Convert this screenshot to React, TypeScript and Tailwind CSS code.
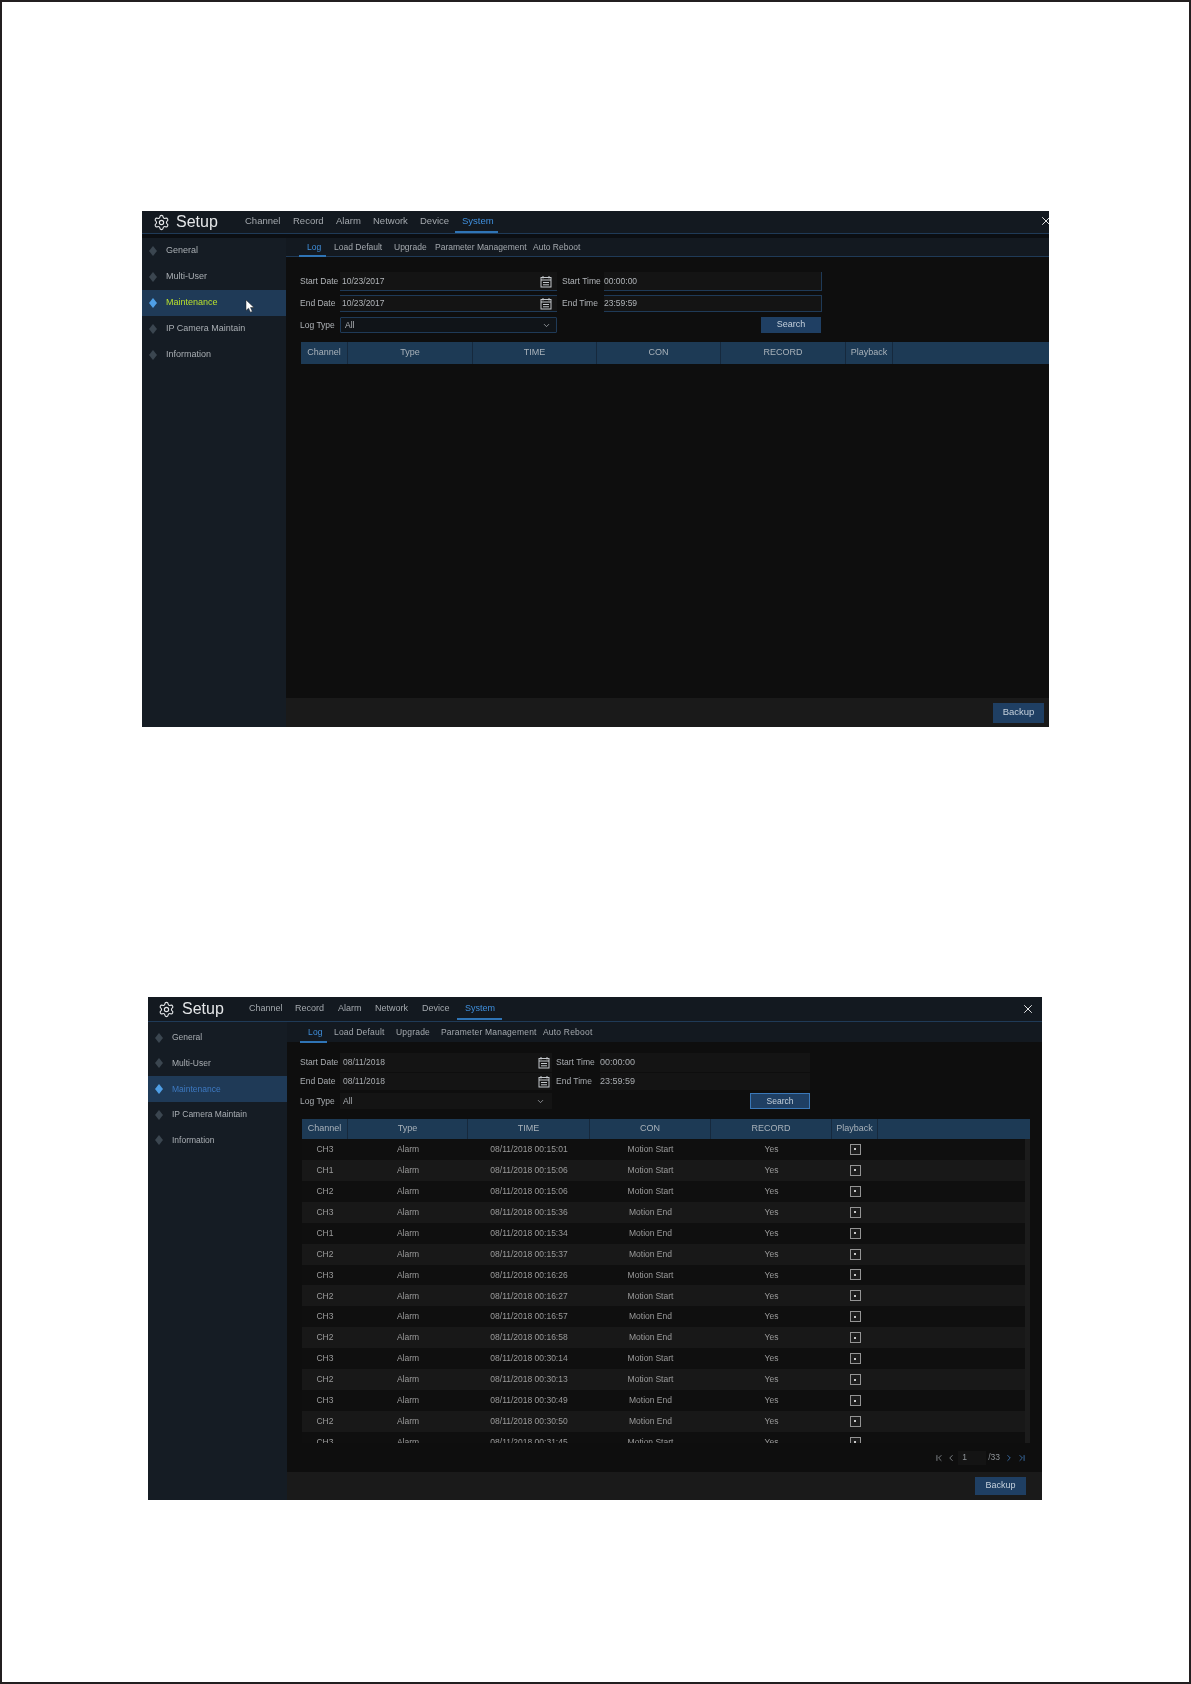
import { ChevronDown, ChevronFirst, ChevronLast, ChevronLeft, ChevronRight, Settings, X } from "lucide-react";

const NAV = ["Channel", "Record", "Alarm", "Network", "Device", "System"];
const MENU = ["General", "Multi-User", "Maintenance", "IP Camera Maintain", "Information"];
const TABS = ["Log", "Load Default", "Upgrade", "Parameter Management", "Auto Reboot"];
const COLS = ["Channel", "Type", "TIME", "CON", "RECORD", "Playback"];

const LOGS = [
  ["CH3", "00:15:01", "Motion Start"],
  ["CH1", "00:15:06", "Motion Start"],
  ["CH2", "00:15:06", "Motion Start"],
  ["CH3", "00:15:36", "Motion End"],
  ["CH1", "00:15:34", "Motion End"],
  ["CH2", "00:15:37", "Motion End"],
  ["CH3", "00:16:26", "Motion Start"],
  ["CH2", "00:16:27", "Motion Start"],
  ["CH3", "00:16:57", "Motion End"],
  ["CH2", "00:16:58", "Motion End"],
  ["CH3", "00:30:14", "Motion Start"],
  ["CH2", "00:30:13", "Motion Start"],
  ["CH3", "00:30:49", "Motion End"],
  ["CH2", "00:30:50", "Motion End"],
  ["CH3", "00:31:45", "Motion Start"],
];

function Diamond({ active }: { active?: boolean }) {
  return (
    <svg width="8" height="10" viewBox="0 0 8 10" className={active ? "text-[#4f9fe6]" : "text-[#3b4650]"}>
      <polygon points="4,0 8,5 4,10 0,5" fill="currentColor" />
    </svg>
  );
}

function CalendarIcon() {
  return (
    <svg width="12" height="13" viewBox="0 0 12 13" fill="none" stroke="#c4c8cc" strokeWidth="1" className="shrink-0">
      <rect x="1" y="2.5" width="10" height="9.5" />
      <path d="M3 1v2.5M9 1v2.5M1 5h10M3 7.5h6M3 9.8h6" />
    </svg>
  );
}

function PlayIcon() {
  return (
    <div className="flex h-[11px] w-[11px] items-center justify-center border border-[#949494] bg-[#1c1c1c]">
      <div className="h-[2px] w-[2px] bg-[#c8c8c8]" />
    </div>
  );
}

function Header({
  height,
  navCols,
  iconBox,
  underline,
  itemPad,
}: {
  height: string;
  navCols: string;
  iconBox: string;
  underline: string;
  itemPad: string;
}) {
  return (
    <div className={"flex shrink-0 items-center border-b border-[#1f3a57] bg-[#131920] " + height}>
      <div className={iconBox}>
        <Settings size={17} strokeWidth={1.6} className="text-[#e4e6e8]" />
        <span className="text-[16px] leading-none text-[#e4e6e8]">Setup</span>
      </div>
      <div className={navCols}>
        {NAV.map((n) => (
          <div key={n} className={n === "System" ? "relative flex h-[22px] items-center text-[#3f8fdc] " + itemPad : "flex h-[22px] items-center text-[#a4a9ae] " + itemPad}>
            {n}
            {n === "System" && <div className={underline} />}
          </div>
        ))}
      </div>
    </div>
  );
}

function Sidebar({ width, rowH, active, cursor }: { width: string; rowH: string; active: string; cursor?: boolean }) {
  return (
    <div className={width}>
      {MENU.map((m, i) => (
        <div key={m} className={i === 2 ? "relative flex items-center gap-[9px] bg-[#1f3a57] pl-[7px] " + rowH : "flex items-center gap-[9px] pl-[7px] " + rowH}>
          <Diamond active={i === 2} />
          <span className={i === 2 ? active : "text-[#a9aeb3]"}>{m}</span>
          {i === 2 && cursor && (
            <svg width="11" height="14" viewBox="0 0 11 14" className="absolute left-[103px] top-[9px]">
              <path d="M1 1v10.5l2.6-2.3 1.8 4 1.9-.8-1.8-3.9h3.5z" fill="#ffffff" stroke="#222" strokeWidth="0.5" />
            </svg>
          )}
        </div>
      ))}
    </div>
  );
}

function Tabs({ cols, height }: { cols: string; height: string }) {
  return (
    <div className={height}>
      <div className={cols}>
        {TABS.map((t, i) => (
          <div key={t} className={i === 0 ? "relative flex h-full items-center whitespace-nowrap text-[#3f8fdc]" : "flex h-full items-center whitespace-nowrap text-[#a4a9ae]"}>
            <span className={i === 0 ? "pl-[8px]" : ""}>{t}</span>
            {i === 0 && <div className="absolute bottom-[-1px] left-0 h-[2px] w-[27px] bg-[#2f74b5]" />}
          </div>
        ))}
      </div>
    </div>
  );
}

function TableHead({ cols }: { cols: string }) {
  return (
    <div className={cols}>
      {COLS.map((c) => (
        <div key={c} className="flex items-center justify-center border-r border-[#16293d]">
          {c}
        </div>
      ))}
      <div />
    </div>
  );
}

function EmptyLog() {
  return (
    <div className="relative flex h-[516px] w-[907px] flex-col overflow-hidden bg-[#0e0e0e] text-[9px] blur-[0.6px]">
      <Header
        height="h-[23px]"
        iconBox="flex w-[103px] shrink-0 items-center gap-[6px] pl-[11px]"
        navCols="grid grid-cols-[48px_43px_37px_47px_42px_45px] text-[9.5px]"
        underline="absolute bottom-0 left-[-7px] h-[2px] w-[43px] bg-[#2f74b5]"
        itemPad="pb-[2px]"
      />
      <X size={14} strokeWidth={1.5} className="absolute right-[-4px] top-[3px] text-white" />
      <div className="h-[4px] shrink-0 bg-[#0b0e12]" />
      <div className="flex min-h-0 flex-1">
        <Sidebar width="w-[144px] shrink-0 bg-[#151c24]" rowH="h-[26px]" active="text-[#b9e12d]" cursor />
        <div className="flex min-w-0 flex-1 flex-col">
          <Tabs
            height="h-[19px] shrink-0 border-b border-[#1f3a57] bg-[#131920] pl-[13px]"
            cols="grid h-full grid-cols-[35px_60px_41px_98px_60px] text-[8.5px]"
          />
          <div className="flex-1 pl-[14px] pt-[15px] text-[#b0b4b8]">
            <div className="flex h-[19px]">
              <div className="flex w-[40px] items-center text-[8.5px]">Start Date</div>
              <div className="flex w-[217px] items-center justify-between border-b border-[#1f3a57] bg-[#141414] pl-[2px] pr-[5px] text-[8.5px]">
                10/23/2017
                <CalendarIcon />
              </div>
              <div className="ml-[5px] flex w-[42px] items-center text-[8.5px]">Start Time</div>
              <div className="flex w-[218px] items-center border-b border-r border-[#1f3a57] bg-[#141414] text-[8.5px]">00:00:00</div>
            </div>
            <div className="mt-[4px] flex h-[17px]">
              <div className="flex w-[40px] items-center text-[8.5px]">End Date</div>
              <div className="flex w-[217px] items-center justify-between border-y border-[#1f3a57] bg-[#141414] pl-[2px] pr-[5px] text-[8.5px]">
                10/23/2017
                <CalendarIcon />
              </div>
              <div className="ml-[5px] flex w-[42px] items-center text-[8.5px]">End Time</div>
              <div className="flex w-[218px] items-center border border-l-0 border-[#1f3a57] bg-[#141414] text-[8.5px]">23:59:59</div>
            </div>
            <div className="mt-[5px] flex h-[16px]">
              <div className="flex w-[40px] items-center text-[8.5px]">Log Type</div>
              <div className="flex w-[217px] items-center justify-between rounded-[1px] border border-[#1f3a57] bg-[#101418] pl-[4px] pr-[5px] text-[8.5px]">
                All
                <ChevronDown size={9} />
              </div>
              <div className="ml-[204px] flex w-[60px] items-center justify-center bg-[#1f3f63] text-[9px] text-[#c4d0dc]">Search</div>
            </div>
            <div className="ml-[1px] mt-[9px]">
              <TableHead cols="grid h-[22px] grid-cols-[47px_125px_124px_124px_125px_47px_1fr] bg-[#1d3a55] text-[9px] text-[#a9b2ba]" />
            </div>
          </div>
          <div className="flex h-[29px] shrink-0 items-center justify-end bg-[#1a1a1a] pr-[5px]">
            <div className="flex h-[20px] w-[51px] items-center justify-center bg-[#1f3f63] text-[9.5px] text-[#c4d0dc]">Backup</div>
          </div>
        </div>
      </div>
    </div>
  );
}

function FullLog() {
  return (
    <div className="relative mt-[270px] ml-[6px] flex h-[503px] w-[894px] flex-col overflow-hidden bg-[#0e0e0e] text-[8.5px] blur-[0.6px]">
      <Header
        height="h-[25px]"
        iconBox="flex w-[101px] shrink-0 items-center gap-[7px] pl-[10px]"
        navCols="grid grid-cols-[46px_43px_37px_47px_43px_45px] text-[9px]"
        underline="absolute bottom-0 left-[-8px] h-[2px] w-[45px] bg-[#2f74b5]"
        itemPad=""
      />
      <X size={14} strokeWidth={1.5} className="absolute right-[7px] top-[5px] text-white" />
      <div className="flex min-h-0 flex-1">
        <Sidebar width="w-[139px] shrink-0 bg-[#151c24] pt-[3px]" rowH="h-[25.6px]" active="text-[#3c78c0]" />
        <div className="flex min-w-0 flex-1 flex-col">
          <Tabs
            height="h-[20px] shrink-0 bg-[#131920] pl-[13px]"
            cols="grid h-full grid-cols-[34px_62px_45px_102px_60px] text-[8.5px] tracking-[0.2px]"
          />
          <div className="relative flex-1 pl-[13px] pt-[11px] text-[#a8acb0]">
            <div className="flex h-[19px]">
              <div className="flex w-[40px] items-center text-[8.5px]">Start Date</div>
              <div className="flex w-[212px] items-center justify-between bg-[#141414] pl-[3px] pr-[2px] text-[8.5px]">
                08/11/2018
                <CalendarIcon />
              </div>
              <div className="ml-[4px] flex w-[44px] items-center text-[8.5px]">Start Time</div>
              <div className="flex w-[210px] items-center bg-[#141414] text-[9px]">00:00:00</div>
            </div>
            <div className="mt-[1px] flex h-[17px]">
              <div className="flex w-[40px] items-center text-[8.5px]">End Date</div>
              <div className="flex w-[212px] items-center justify-between bg-[#141414] pl-[3px] pr-[2px] text-[8.5px]">
                08/11/2018
                <CalendarIcon />
              </div>
              <div className="ml-[4px] flex w-[44px] items-center text-[8.5px]">End Time</div>
              <div className="flex w-[210px] items-center bg-[#141414] text-[9px]">23:59:59</div>
            </div>
            <div className="mt-[3px] flex h-[16px]">
              <div className="flex w-[40px] items-center text-[8.5px]">Log Type</div>
              <div className="flex w-[212px] items-center justify-between bg-[#141414] pl-[3px] pr-[7px] text-[8.5px]">
                All
                <ChevronDown size={9} />
              </div>
              <div className="ml-[198px] flex w-[60px] items-center justify-center border border-[#3a78b8] bg-[#1f3f63] text-[8.5px] text-[#c4d0dc]">Search</div>
            </div>
            <div className="ml-[2px] mt-[10px] w-[728px]">
              <TableHead cols="grid h-[20px] grid-cols-[46px_120px_122px_121px_121px_46px_1fr] bg-[#1d3a55] text-[9px] text-[#a9b2ba]" />
            </div>
            <div className="ml-[2px] flex h-[304px] w-[728px] overflow-hidden">
              <div className="w-[723px]">
                {LOGS.map((r, i) => (
                  <div
                    key={i}
                    className={
                      i % 2 === 1
                        ? "grid h-[20.93px] grid-cols-[46px_120px_122px_121px_121px_46px] items-center bg-[#181818] text-center text-[8.5px] text-[#9b9b9b]"
                        : "grid h-[20.93px] grid-cols-[46px_120px_122px_121px_121px_46px] items-center bg-[#0f0f0f] text-center text-[8.5px] text-[#9b9b9b]"
                    }
                  >
                    <div>{r[0]}</div>
                    <div>Alarm</div>
                    <div>08/11/2018 {r[1]}</div>
                    <div>{r[2]}</div>
                    <div>Yes</div>
                    <div className="flex justify-center">
                      <PlayIcon />
                    </div>
                  </div>
                ))}
              </div>
              <div className="w-[5px] bg-[#1c1c1c]" />
            </div>
            <div className="flex h-[29px] w-[727px] items-center justify-end gap-[2px] text-[8.5px] text-[#8f9499]">
              <ChevronFirst size={10} />
              <ChevronLeft size={10} />
              <div className="flex h-[14px] w-[28px] items-center bg-[#141414] pl-[4px]">1</div>
              <span className="mr-[2px]">/33</span>
              <ChevronRight size={10} className="text-[#3f78b8]" />
              <ChevronLast size={10} className="ml-[1px] text-[#3f78b8]" />
            </div>
          </div>
          <div className="flex h-[28px] shrink-0 items-center justify-end bg-[#1a1a1a] pr-[16px]">
            <div className="flex h-[18px] w-[51px] items-center justify-center bg-[#1f3f63] text-[9px] text-[#c4d0dc]">Backup</div>
          </div>
        </div>
      </div>
    </div>
  );
}

export default function App() {
  return (
    <div className="h-[1684px] w-[1191px] border-2 border-[#231f20] bg-white pt-[209px] font-['Liberation_Sans',Arial,sans-serif]">
      <div className="ml-[140px]">
        <EmptyLog />
        <FullLog />
      </div>
    </div>
  );
}
